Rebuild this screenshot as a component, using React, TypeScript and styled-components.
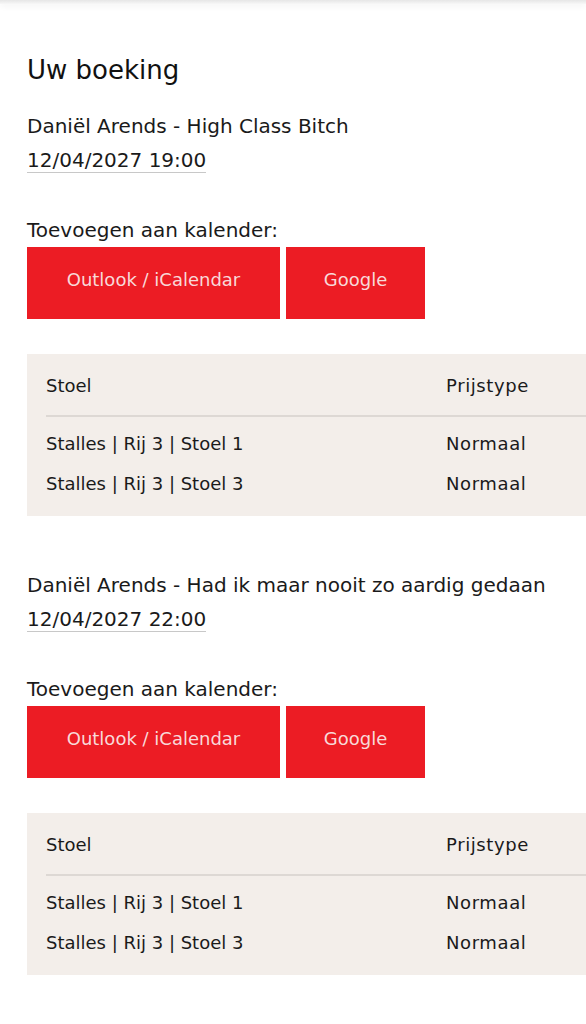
import styled, { createGlobalStyle } from "styled-components";

const GlobalStyle = createGlobalStyle`
  html, body {
    margin: 0;
    padding: 0;
    background: #ffffff;
    overflow-x: hidden;
  }
  body {
    font-family: "DejaVu Sans", Verdana, sans-serif;
    color: #1a1a1a;
  }
`;

type Seat = { seat: string; type: string };
type Booking = { title: string; date: string; seats: Seat[] };

const bookings: Booking[] = [
  {
    title: "Daniël Arends - High Class Bitch",
    date: "12/04/2027 19:00",
    seats: [
      { seat: "Stalles | Rij 3 | Stoel 1", type: "Normaal" },
      { seat: "Stalles | Rij 3 | Stoel 3", type: "Normaal" },
    ],
  },
  {
    title: "Daniël Arends - Had ik maar nooit zo aardig gedaan",
    date: "12/04/2027 22:00",
    seats: [
      { seat: "Stalles | Rij 3 | Stoel 1", type: "Normaal" },
      { seat: "Stalles | Rij 3 | Stoel 3", type: "Normaal" },
    ],
  },
];

function BookingBlock({ booking }: { booking: Booking }) {
  return (
    <Block>
      <Title>{booking.title}</Title>
      <DateLine>
        <span>{booking.date}</span>
      </DateLine>
      <CalendarLabel>Toevoegen aan kalender:</CalendarLabel>
      <Buttons>
        <CalButton $width={253}>Outlook / iCalendar</CalButton>
        <CalButton $width={139}>Google</CalButton>
      </Buttons>
      <SeatTable>
        <HeadRow>
          <Cell>Stoel</Cell>
          <Cell $wide>Prijstype</Cell>
        </HeadRow>
        {booking.seats.map((s, i) => (
          <Row key={i}>
            <Cell>{s.seat}</Cell>
            <Cell $wide>{s.type}</Cell>
          </Row>
        ))}
      </SeatTable>
    </Block>
  );
}

export default function App() {
  return (
    <>
      <GlobalStyle />
      <Page>
        <TopShade />
        <Content>
          <Heading>Uw boeking</Heading>
          {bookings.map((b, i) => (
            <BookingBlock key={i} booking={b} />
          ))}
        </Content>
      </Page>
    </>
  );
}

const Page = styled.div`
  width: 100%;
  min-height: 1024px;
`;

const TopShade = styled.div`
  height: 4px;
  background: linear-gradient(#e6e6e6, #f7f7f7);
  box-shadow: 0 2px 6px rgba(0, 0, 0, 0.06);
`;

const Content = styled.div`
  padding: 0 0 0 27px;
`;

const Heading = styled.h1`
  margin: 50px 0 0;
  font-family: "DejaVu Sans", Verdana, sans-serif;
  font-weight: normal;
  font-size: 26px;
  line-height: 32px;
  color: #111;
`;

const Block = styled.section`
  display: flex;
  flex-direction: column;
  margin-top: 23px;
  & + & {
    margin-top: 52px;
  }
`;

const Title = styled.div`
  font-size: 20px;
  line-height: 34px;
`;

const DateLine = styled.div`
  font-size: 20px;
  line-height: 34px;
  span {
    border-bottom: 1px solid #c8c8c8;
  }
`;

const CalendarLabel = styled.div`
  margin-top: 36px;
  font-size: 20px;
  line-height: 34px;
`;

const Buttons = styled.div`
  display: flex;
  gap: 6px;
`;

const CalButton = styled.button<{ $width: number }>`
  width: ${(p) => p.$width}px;
  height: 72px;
  padding: 0 0 8px;
  border: none;
  background: #ec1c24;
  color: #f8d9d9;
  font-family: "DejaVu Sans", Verdana, sans-serif;
  font-size: 18px;
  cursor: pointer;
`;

const SeatTable = styled.div`
  margin-top: 35px;
  width: 620px;
  background: #f3eeea;
  padding: 14px 0 13px 19px;
  box-sizing: border-box;
`;

const HeadRow = styled.div`
  display: grid;
  grid-template-columns: 400px 1fr;
  line-height: 36px;
  padding-bottom: 11px;
  border-bottom: 2px solid #ddd8d4;
  margin-bottom: 6px;
`;

const Row = styled.div`
  display: grid;
  grid-template-columns: 400px 1fr;
  height: 40px;
  align-items: center;
`;

const Cell = styled.div<{ $wide?: boolean }>`
  font-size: 18px;
  letter-spacing: ${(p) => (p.$wide ? "0.6px" : "0")};
`;
